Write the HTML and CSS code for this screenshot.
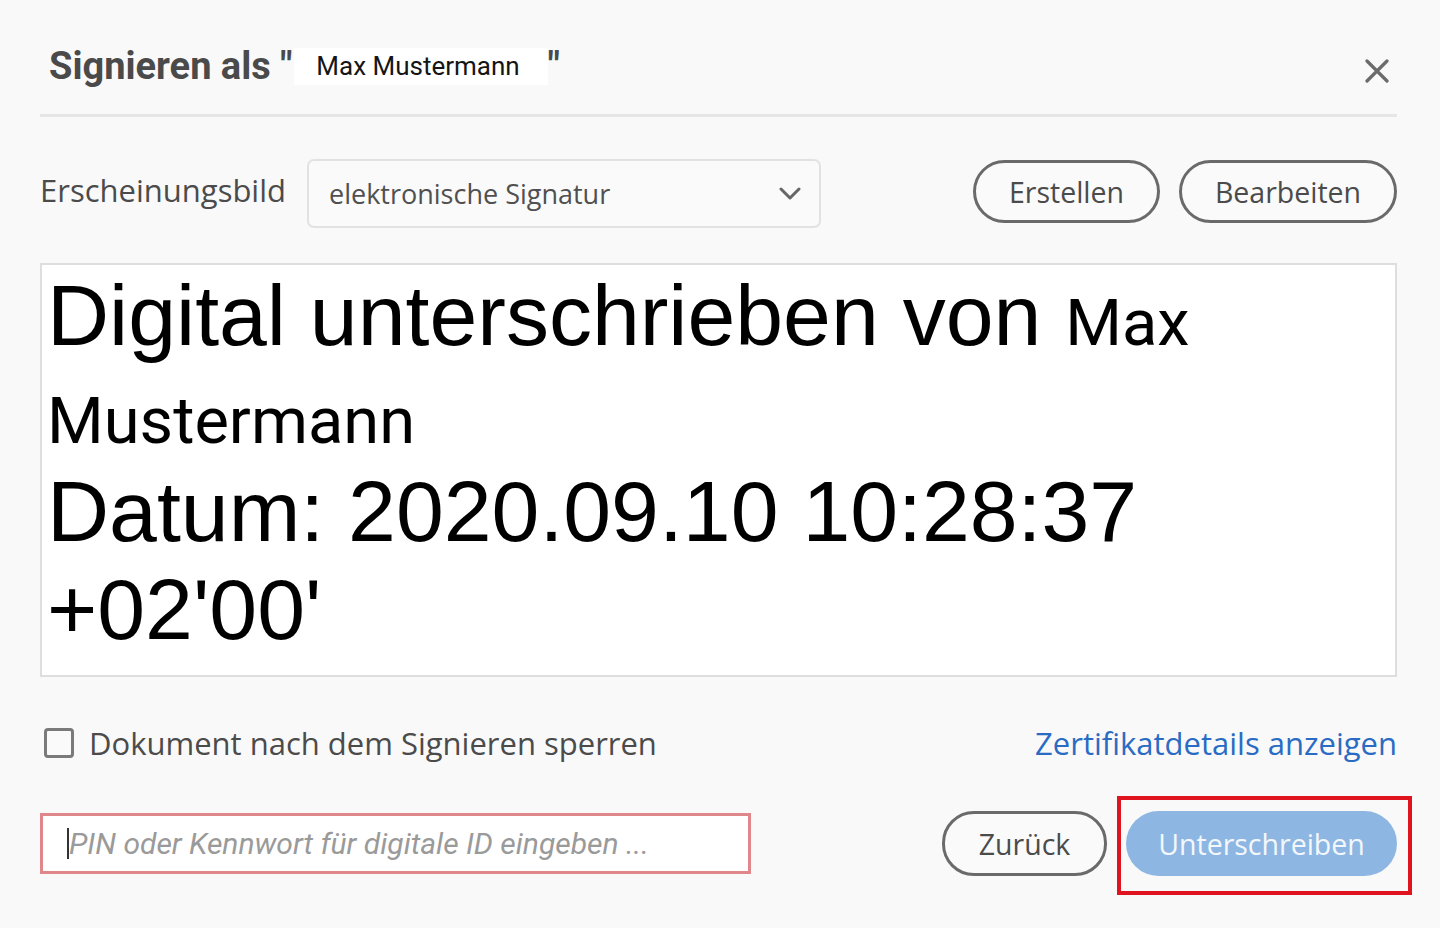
FILE: index.html
```html
<!DOCTYPE html>
<html>
<head>
    <title>Signieren</title>
    <link rel="stylesheet" href="styles.css">
</head>
<body>
    <div class="dialog">
        <div class="header">
            <h1 class="title">Signieren als "<span class="signer">Max Mustermann</span>"</h1>
            <button class="close" type="button" aria-label="Schließen">
                <svg width="24" height="24" viewBox="0 0 24 24">
                    <path d="M2 2 L22 22 M22 2 L2 22" stroke="#6b6b6b" stroke-width="3.2" stroke-linecap="round" fill="none"/>
                </svg>
            </button>
        </div>

        <div class="appearance">
            <label class="label" for="appearanceSelect">Erscheinungsbild</label>
            <div class="select" id="appearanceSelect">
                <span>elektronische Signatur</span>
                <svg width="22" height="14" viewBox="0 0 22 14">
                    <path d="M2 2 L11 11 L20 2" stroke="#666" stroke-width="3" stroke-linecap="round" stroke-linejoin="round" fill="none"/>
                </svg>
            </div>
            <div class="actions">
                <button class="pill create" type="button">Erstellen</button>
                <button class="pill edit" type="button">Bearbeiten</button>
            </div>
        </div>

        <div class="preview">
            <p class="sig-text">Digital unterschrieben von <span class="sig-name">Max Mustermann</span><br>Datum: 2020.09.10 10:28:37 +02'00'</p>
        </div>

        <div class="options">
            <label class="lock">
                <span class="checkbox"></span>
                Dokument nach dem Signieren sperren
            </label>
            <a class="details" href="#">Zertifikatdetails anzeigen</a>
        </div>

        <div class="footer">
            <div class="pin-field">
                <span class="caret"></span>
                <span class="placeholder">PIN oder Kennwort für digitale ID eingeben ...</span>
            </div>
            <div class="buttons">
                <button class="pill back" type="button">Zurück</button>
                <div class="highlight">
                    <button class="sign" type="button">Unterschreiben</button>
                </div>
            </div>
        </div>
    </div>
</body>
</html>
```
FILE: styles.css
```css
body {
    margin: 0;
    padding: 0;
    background-color: #f9f9f9;
    font-family: "Open Sans", Arial, sans-serif;
    color: #4b4b4b;
}

button {
    font-family: inherit;
    cursor: pointer;
}

.dialog {
    padding: 0 43px 52px 40px;
}

/* header */
.header {
    display: flex;
    align-items: center;
    justify-content: space-between;
    padding: 44px 0 26px 0;
    border-bottom: 3px solid #e6e6e6;
}

.title {
    margin: 0;
    padding-left: 9px;
    height: 44px;
    display: flex;
    align-items: center;
    font-family: Roboto, "Liberation Sans", sans-serif;
    font-weight: bold;
    font-size: 38px;
    color: #4a4a4a;
}

.signer {
    display: inline-block;
    margin-left: 2px;
    padding: 0 28px 0 22px;
    height: 37px;
    line-height: 37px;
    background-color: #fff;
    font-weight: normal;
    font-size: 26px;
    color: #151515;
}

.close {
    margin: 10px 8px 0 0;
    padding: 0;
    border: none;
    background: none;
    width: 24px;
    height: 24px;
}

/* appearance row */
.appearance {
    display: flex;
    align-items: center;
    margin-top: 42px;
    height: 69px;
}

.label {
    font-size: 31px;
    margin-right: 21px;
    padding-bottom: 8px;
}

.select {
    box-sizing: border-box;
    width: 514px;
    height: 69px;
    display: flex;
    align-items: center;
    justify-content: space-between;
    padding: 0 18px 0 20px;
    border: 2px solid #e2e2e2;
    border-radius: 7px;
    background-color: #fafafa;
    font-size: 27px;
    color: #505050;
}

.actions {
    margin-left: auto;
    margin-bottom: 4px;
    display: flex;
    gap: 19px;
}

.pill {
    box-sizing: border-box;
    height: 63px;
    padding: 0 20px;
    border: 3px solid #6a6a6a;
    border-radius: 32px;
    background-color: #fafafa;
    font-size: 28.5px;
    color: #4b4b4b;
}

.create {
    width: 187px;
}

.edit {
    width: 218px;
}

/* signature preview */
.preview {
    box-sizing: border-box;
    margin-top: 35px;
    height: 414px;
    border: 2px solid #dedede;
    background-color: #fff;
    padding: 1px 0 0 5px;
    overflow: hidden;
}

.sig-text {
    margin: 0;
    font-family: "Liberation Sans", Arial, sans-serif;
    font-size: 86px;
    line-height: 98px;
    color: #000;
}

.sig-name {
    font-family: Roboto, "Liberation Sans", sans-serif;
    font-size: 65px;
    line-height: 1;
}

/* options */
.options {
    display: flex;
    align-items: center;
    justify-content: space-between;
    margin-top: 43px;
    height: 46px;
}

.lock {
    display: flex;
    align-items: center;
    font-size: 31px;
    color: #4b4b4b;
}

.checkbox {
    box-sizing: border-box;
    width: 30px;
    height: 30px;
    margin: 0 15px 0 4px;
    border: 3px solid #7a7a7a;
    border-radius: 4px;
    background-color: #fafafa;
}

.details {
    font-size: 31px;
    color: #2a6cc3;
    text-decoration: none;
}

/* footer */
.footer {
    display: flex;
    align-items: center;
    justify-content: space-between;
    margin-top: 45px;
    height: 65px;
}

.pin-field {
    box-sizing: border-box;
    width: 711px;
    height: 61px;
    display: flex;
    align-items: center;
    padding-left: 24px;
    border: 3px solid #e0878b;
    background-color: #fff;
}

.caret {
    width: 2px;
    height: 31px;
    background-color: #333;
}

.placeholder {
    font-family: Roboto, "Liberation Sans", sans-serif;
    font-style: italic;
    font-size: 30px;
    color: #9a9a9a;
}

.buttons {
    display: flex;
    gap: 19px;
}

.back {
    width: 165px;
    height: 65px;
}

.highlight {
    position: relative;
}

.sign {
    display: block;
    width: 271px;
    height: 65px;
    border: none;
    border-radius: 33px;
    background-color: #8db7e2;
    font-size: 28.5px;
    color: #f3f7fc;
}

/* red annotation frame drawn over the sign button */
.highlight::after {
    content: "";
    position: absolute;
    top: -15px;
    right: -15px;
    bottom: -19px;
    left: -9px;
    border: 4px solid #e0141e;
    pointer-events: none;
}
```
